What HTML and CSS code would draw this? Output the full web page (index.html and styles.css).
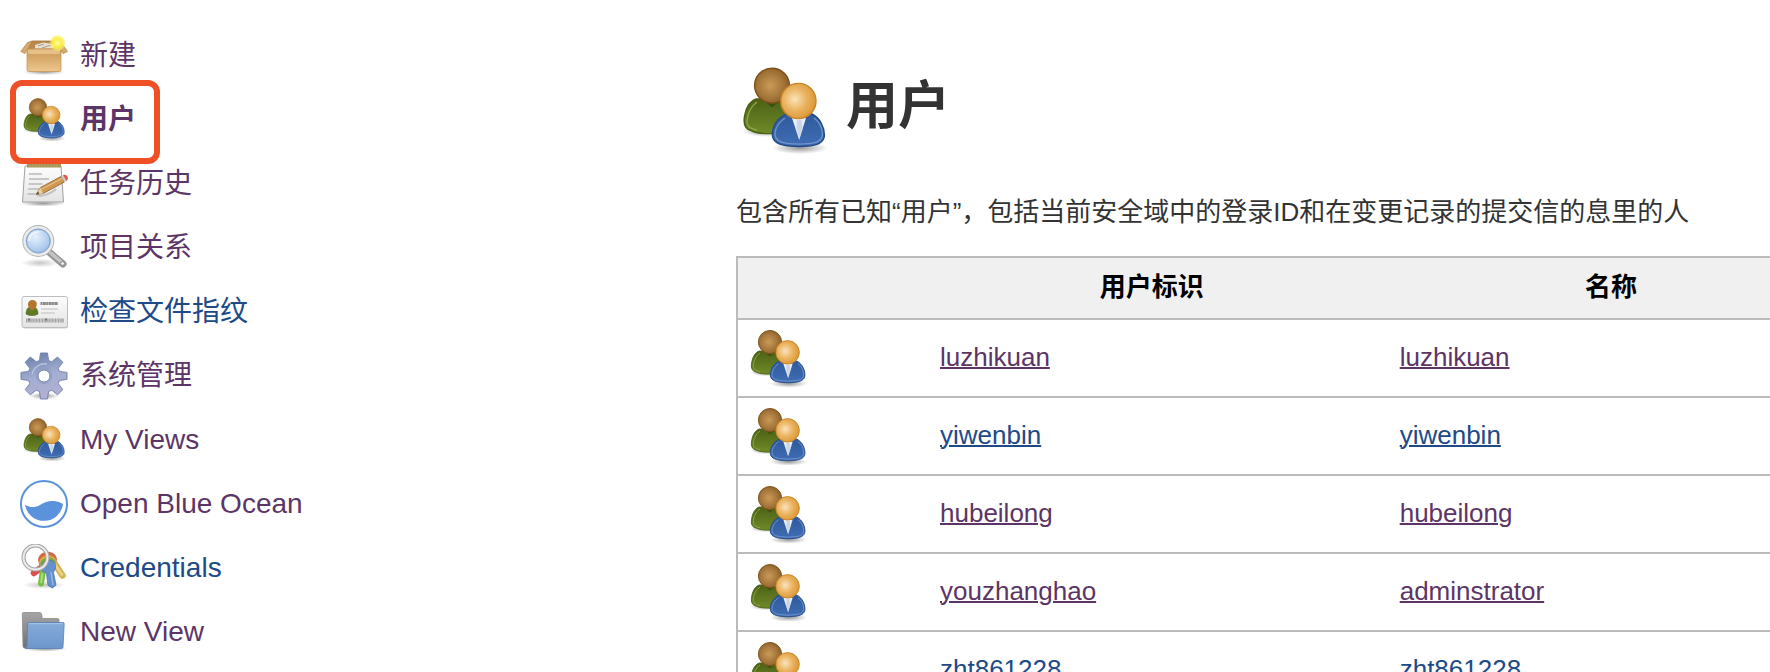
FILE: index.html
```
<!DOCTYPE html>
<html lang="zh-CN">
<head>
<meta charset="utf-8">
<title>用户</title>
<link rel="stylesheet" href="styles.css">
</head>
<body>
<svg class="sprite" aria-hidden="true">
  <defs>
    <radialGradient id="brown" cx=".45" cy=".5" r=".6"><stop offset="0" stop-color="#cb9a58"/><stop offset=".6" stop-color="#a4763a"/><stop offset="1" stop-color="#865a22"/></radialGradient>
    <radialGradient id="orange" cx=".4" cy=".45" r=".65"><stop offset="0" stop-color="#fbe3bb"/><stop offset=".5" stop-color="#eab360"/><stop offset="1" stop-color="#d8932f"/></radialGradient>
    <linearGradient id="green" x2="0" y2="1"><stop offset="0" stop-color="#4c6116"/><stop offset="1" stop-color="#6f8a28"/></linearGradient>
    <linearGradient id="blue" x2="0" y2="1"><stop offset="0" stop-color="#2f5a9c"/><stop offset="1" stop-color="#3f6db4"/></linearGradient>
    <radialGradient id="shade"><stop offset="0" stop-color="#000" stop-opacity=".4"/><stop offset="1" stop-color="#000" stop-opacity="0"/></radialGradient>
    <linearGradient id="carton" x2="0" y2="1"><stop offset="0" stop-color="#c99553"/><stop offset="1" stop-color="#edc78d"/></linearGradient>
    <radialGradient id="sun"><stop offset="0" stop-color="#fffbb0"/><stop offset=".45" stop-color="#fbf04a"/><stop offset=".75" stop-color="#fbee55" stop-opacity=".8"/><stop offset="1" stop-color="#fbf080" stop-opacity="0"/></radialGradient>
    <linearGradient id="paper" x2="0" y2="1"><stop offset="0" stop-color="#fdfdfd"/><stop offset="1" stop-color="#e3e3e3"/></linearGradient>
    <radialGradient id="lens" cx=".4" cy=".35" r=".7"><stop offset="0" stop-color="#e6f1fc"/><stop offset="1" stop-color="#94b8e6"/></radialGradient>
    <linearGradient id="gear" x1=".3" x2=".6" y2="1"><stop offset="0" stop-color="#6a7fae"/><stop offset=".5" stop-color="#a3aed0"/><stop offset="1" stop-color="#b4b0d4"/></linearGradient>
    <linearGradient id="folder" x2="0" y2="1"><stop offset="0" stop-color="#85aad8"/><stop offset="1" stop-color="#6c97cd"/></linearGradient>
    <linearGradient id="folder-back" x2="0" y2="1"><stop offset="0" stop-color="#a5a5a5"/><stop offset="1" stop-color="#707070"/></linearGradient>
  </defs>

  <symbol id="i-users" viewBox="0 0 48 48">
    <ellipse cx="15" cy="34" rx="12" ry="3" fill="url(#shade)"/>
    <ellipse cx="32" cy="42.500" rx="14" ry="3" fill="url(#shade)"/>
    <path d="M10 18h14l4 16c-5 1.500-16 2-20 0-4-1-4.500-4-3.600-8 .8-4 2.600-7 5.600-8z" fill="url(#green)" stroke="#4b6212" stroke-width=".7"/>
    <path d="M10.500 19.500c-3 2-5 6-5 10 0 2.500 2 3.500 5 4" fill="none" stroke="#8fa648" stroke-width=".7"/>
    <path d="M15 19l3 2.500 3-2.500" fill="none" stroke="#3c4f0e"/>
    <circle cx="18" cy="11.300" r="8.700" fill="url(#brown)" stroke="#7c5119" stroke-width=".7"/>
    <path d="M25 25.500h13c4 2 6.200 6.500 6.200 10.500 0 4-4 5-6.700 5.400-4 .5-8 .5-12 0-4-.5-7.300-1.900-7.300-5.500 0-5 3-8.400 6.800-10.400z" fill="url(#blue)" stroke="#264b86" stroke-width=".7"/>
    <path d="M24.500 27.500c-3 2-5 5-5 8.300 0 3 3 4 6 4.400 4 .5 8 .5 12 0 3.500-.4 5.700-1.500 5.700-4.600 0-3.300-1.700-6.200-4.200-8.100" fill="none" stroke="#6f94cd" stroke-width=".7"/>
    <path d="M28 27.500h7l-3.400 11z" fill="#e9eef7"/>
    <path d="M30.500 28.500h2.200l.6 4-1.600 5-1.500-5z" fill="#cdd6e6"/>
    <circle cx="31.200" cy="19" r="8.800" fill="url(#orange)" stroke="#c88528" stroke-width=".7"/>
  </symbol>

  <symbol id="i-new" viewBox="0 0 48 48">
    <ellipse cx="24" cy="40" rx="21" ry="3" fill="url(#shade)"/>
    <path d="M12 9h26l3.500 10.500H7z" fill="#b98a4c" stroke="#a87431" stroke-width=".8"/>
    <path d="M15 13l8-2.500 13 2-2 4H15z" fill="#e7dfd0"/>
    <path d="M18 14l6-2m-2 4l9-3" stroke="#a49c8f" fill="none"/>
    <path d="M7 17h34v20.500a2 2 0 0 1-2 2H9a2 2 0 0 1-2-2z" fill="url(#carton)" stroke="#c8965a" stroke-width=".8"/>
    <path d="M7 17.500L12 9 7.500 10.500.8 19.500 5 21.500zM41 17.500L37.500 9.500l4 1.500 6 8.500-4.500 2z" fill="#d6ab6d" stroke="#b98a4c" stroke-width=".8"/>
    <path d="M7.500 17.500h33l-1 4.500h-31z" fill="#e6c087"/>
    <circle cx="37.500" cy="11" r="8.500" fill="url(#sun)"/>
  </symbol>

  <symbol id="i-history" viewBox="0 0 48 48">
    <ellipse cx="23" cy="43.500" rx="23" ry="3" fill="url(#shade)"/>
    <path d="M5 6h36l2.500 36h-41z" fill="url(#paper)" stroke="#a2a2a2"/>
    <path d="M7 2.500h34V7.500H7z" fill="#a59455"/>
    <path d="M10 3v4m3-4v4m3-4v4m3-4v4m3-4v4m3-4v4m3-4v4m3-4v4m3-4v4m3-4v4" stroke="#b9a966" fill="none"/>
    <path d="M9 14h13m-13 5h20m-20.500 5h14m-14.500 5h12m-12.500 5h8" stroke="#b9b9b9" fill="none" stroke-width="1.300"/>
    <path d="M17 35c5 2 14-1 19-6" stroke="#999" opacity=".5" fill="none" stroke-width="2"/>
    <path d="M16 34.500l4.500-7L41 16.500l3.500 5.500L23 33.500z" fill="#cf9853" stroke="#8f6024" stroke-width=".8"/>
    <path d="M22 29l20-10.500" stroke="#f0c98b"/>
    <path d="M16 34.500l4.500-7L23 33.500z" fill="#e8cfa5"/>
    <path d="M16 34.500l2-3 1.200 2.300z" fill="#444"/>
    <path d="M41 16.500l2-1.200 3.500 5.700-2 1z" fill="#c9c9c9"/>
    <path d="M43 15.300c3-2 7 2.500 3.500 5.700z" fill="#dd5750"/>
  </symbol>

  <symbol id="i-search" viewBox="0 0 48 48">
    <ellipse cx="20" cy="39" rx="19" ry="4.500" fill="url(#shade)" opacity=".55"/>
    <path d="M29 28l14 12" stroke="#979797" stroke-width="7" stroke-linecap="round"/>
    <path d="M29 27.500l14 12" stroke="#c4c4c4" stroke-width="3.500" stroke-linecap="round"/>
    <circle cx="42.500" cy="39.500" r="2" fill="#eee" stroke="#888"/>
    <circle cx="18.300" cy="17" r="14" fill="url(#lens)" stroke="#b2b2b2" stroke-width="4"/>
    <circle cx="18.300" cy="17" r="13.800" fill="none" stroke="#e9ecec" stroke-width="2.500"/>
    <circle cx="18.300" cy="17" r="11.800" fill="none" stroke="#7fa4d8" stroke-width="1"/>
    <path d="M9 17c0-6 5-9.500 10-9" fill="none" stroke="#fff" stroke-width="2" opacity=".6"/>
  </symbol>

  <symbol id="i-card" viewBox="0 0 48 48">
    <rect x="2" y="10" width="46" height="30.500" rx="2.500" fill="#999" opacity=".45"/>
    <rect x="2" y="8.500" width="45.500" height="31" rx="2" fill="url(#paper)" stroke="#bdbdbd"/>
    <path d="M6 26c0-5 3-8 6-8s6 3 6 8c-3 2-9 2-12 0z" fill="#5d7b25" stroke="#4d661c" stroke-width=".6"/>
    <path d="M8 15.500a4.500 4.500 0 0 1 8.800 0c0 4-2 6.500-4.400 6.500S8 19.500 8 15.500z" fill="#b3762f"/>
    <path d="M20.500 15.500h17.500" stroke="#8a8a8a" stroke-width="3" stroke-dasharray="2 .4 3 .3"/>
    <path d="M21 21h17m-17 4h14" stroke="#cfcfcf" stroke-width="1.300"/>
    <path d="M6 32.500h38" stroke="#a2a2a2" stroke-width="4" stroke-dasharray="1.500 .5 .8 .4"/>
    <path d="M8 31.500h2m15 0h2" stroke="#777" stroke-width="2"/>
  </symbol>

  <symbol id="i-gear" viewBox="0 0 48 48">
    <ellipse cx="24" cy="44" rx="15" ry="3.500" fill="url(#shade)"/>
    <path fill-rule="evenodd" fill="url(#gear)" stroke="#7684ad" stroke-width="1" stroke-linejoin="round" d="M20.500 1h7l1 7.500 3.200 1.300L37.500 5l5.300 5.300-4.600 6 1.300 3.200 7.500.9v7l-7.500 1-1.300 3.200 4.600 6-5.300 5.200-5.800-4.600-3.200 1.300-1 7.500h-7l-1-7.500-3.200-1.300-6 4.600-5.100-5.200 4.600-6-1.300-3.200-7.500-1v-7l7.500-.9 1.300-3.200-4.600-6L10.300 5l6 4.800 3.200-1.300zM24 18a6 6 0 1 0 0 12 6 6 0 0 0 0-12z"/>
    <path d="M12 22c2-7 8-11 15-10" stroke="#c8d1e7" stroke-width="1.500" fill="none" opacity=".7"/>
    <path d="M24 16.500a7.500 7.500 0 1 0 .1 0" stroke="#8f9bc2" fill="none"/>
  </symbol>

  <symbol id="i-ocean" viewBox="0 0 48 48">
    <circle cx="24" cy="24" r="23" fill="#fff" stroke="#5b92dc" stroke-width="2"/>
    <path d="M5 24.800c5 3 10 3 15 .2 5-3 9-4.500 14-4 3.500.4 6.500 1.400 9 3A19.200 19.200 0 0 1 5 24.800z" fill="#5b92dc"/>
  </symbol>

  <symbol id="i-keys" viewBox="0 0 48 48">
    <ellipse cx="24" cy="41" rx="21" ry="4" fill="url(#shade)" opacity=".6"/>
    <path d="M33 17l9.500 14.500" stroke="#d3b456" stroke-width="6.500" stroke-linecap="round"/>
    <path d="M34 19l8.500 12.500" stroke="#ead48a" stroke-width="2.500"/>
    <path d="M22 23l-8 6" stroke="#d9504c" stroke-width="6.500" stroke-linecap="round"/>
    <path d="M23.500 22L21 39.500" stroke="#78c044" stroke-width="6" stroke-linecap="round"/>
    <path d="M22.500 29L21 39" stroke="#a9e07c" stroke-width="2"/>
    <path d="M18 16c1-10.500 17-11 19-1l-2 6-15 3z" fill="#d9663c"/>
    <path d="M19 18c2-8 14-9 17-2l-2 6-13 3z" fill="#d3ae4c"/>
    <path d="M20 20c2-7.500 11-8.500 15-3.500l-2 7-11 2z" fill="#76a84a"/>
    <path d="M28 16.500c5-1 8 3 7.500 7-.3 3-2 4-2 5L36 41l-3.500 3-4.500-2.500-1.500-12c-4-2-6-4-5-7 .7-3 3-5.500 6.500-6z" fill="#6491cb" stroke="#4a77b2" stroke-width=".8"/>
    <path d="M31 28l2 13" stroke="#93b6e2" stroke-width="1.500"/>
    <circle cx="15.500" cy="13.500" r="12" fill="none" stroke="#a5a5a5" stroke-width="4"/>
    <circle cx="15.500" cy="13.500" r="12" fill="none" stroke="#ececec" stroke-width="2"/>
  </symbol>

  <symbol id="i-folder" viewBox="0 0 48 48">
    <ellipse cx="25" cy="41" rx="22" ry="2.500" fill="url(#shade)"/>
    <path d="M3.500 4.500h16c1.500 0 2 .8 2.200 2l.5 4h15.300c1 0 1.500.5 1.500 1.500V40H5c-1.200 0-2-.6-2-2l-.7-32c0-1 .3-1.500 1.200-1.500z" fill="url(#folder-back)" stroke="#8a8a8a" stroke-width=".8"/>
    <path d="M8.500 14.500h34.500c.8 0 1.200.4 1.200 1.200L43 39c0 1-.6 1.500-1.500 1.500H5.500c1-.3 1.500-1.500 1.500-3l.5-22c0-.6.4-1 1-1z" fill="url(#folder)" stroke="#5580b8" stroke-width=".8"/>
    <path d="M9 15.700h34" stroke="#b3cbea" stroke-width=".8"/>
  </symbol>
</svg>

<div class="page">
  <nav class="side">
    <ul class="tasks">
      <li class="task"><svg class="icon"><use href="#i-new"/></svg><a class="task-link visited" href="#new">新建</a></li>
      <li class="task marked"><svg class="icon"><use href="#i-users"/></svg><a class="task-link visited current" href="#users">用户</a></li>
      <li class="task"><svg class="icon"><use href="#i-history"/></svg><a class="task-link visited" href="#history">任务历史</a></li>
      <li class="task"><svg class="icon"><use href="#i-search"/></svg><a class="task-link visited" href="#relation">项目关系</a></li>
      <li class="task"><svg class="icon"><use href="#i-card"/></svg><a class="task-link" href="#fingerprint">检查文件指纹</a></li>
      <li class="task"><svg class="icon"><use href="#i-gear"/></svg><a class="task-link visited" href="#manage">系统管理</a></li>
      <li class="task"><svg class="icon"><use href="#i-users"/></svg><a class="task-link visited" href="#my-views">My Views</a></li>
      <li class="task"><svg class="icon"><use href="#i-ocean"/></svg><a class="task-link visited" href="#ocean">Open Blue Ocean</a></li>
      <li class="task"><svg class="icon"><use href="#i-keys"/></svg><a class="task-link" href="#credentials">Credentials</a></li>
      <li class="task"><svg class="icon"><use href="#i-folder"/></svg><a class="task-link visited" href="#new-view">New View</a></li>
    </ul>
  </nav>

  <main class="main">
    <header class="heading">
      <svg class="icon-large"><use href="#i-users"/></svg>
      <h1 class="title">用户</h1>
    </header>
    <p class="intro">包含所有已知“用户”，包括当前安全域中的登录ID和在变更记录的提交信的息里的人</p>
    <table class="people">
      <colgroup><col class="col-icon"><col><col></colgroup>
      <thead>
        <tr><th></th><th scope="col">用户标识</th><th scope="col">名称</th></tr>
      </thead>
      <tbody>
        <tr><td class="pic"><svg class="icon-medium"><use href="#i-users"/></svg></td><td><a class="visited" href="#luzhikuan">luzhikuan</a></td><td><a class="visited" href="#luzhikuan">luzhikuan</a></td></tr>
        <tr><td class="pic"><svg class="icon-medium"><use href="#i-users"/></svg></td><td><a href="#yiwenbin">yiwenbin</a></td><td><a href="#yiwenbin">yiwenbin</a></td></tr>
        <tr><td class="pic"><svg class="icon-medium"><use href="#i-users"/></svg></td><td><a class="visited" href="#hubeilong">hubeilong</a></td><td><a class="visited" href="#hubeilong">hubeilong</a></td></tr>
        <tr><td class="pic"><svg class="icon-medium"><use href="#i-users"/></svg></td><td><a class="visited" href="#youzhanghao">youzhanghao</a></td><td><a class="visited" href="#youzhanghao">adminstrator</a></td></tr>
        <tr><td class="pic"><svg class="icon-medium"><use href="#i-users"/></svg></td><td><a href="#zht861228">zht861228</a></td><td><a href="#zht861228">zht861228</a></td></tr>
      </tbody>
    </table>
  </main>
</div>
</body>
</html>
```
FILE: styles.css
```
*,
*::after {
  box-sizing: border-box;
}

body {
  margin: 0;
  background: #fff;
  color: #333;
  font: 26px/36px "Liberation Sans", "Noto Sans CJK SC", sans-serif;
}

a {
  color: #204a87;
}

a.visited {
  color: #5c3566;
}

.sprite {
  position: absolute;
  width: 0;
  height: 0;
}

.page {
  display: flex;
  height: 100vh;
  overflow: hidden;
}

.side {
  flex: 0 0 736px;
  padding: 24px 20px 0;
}

.tasks {
  margin: 0;
  padding: 0;
  list-style: none;
}

.task {
  position: relative;
  display: flex;
  align-items: center;
  gap: 12px;
  height: 64px;
}

.task-link {
  font-size: 28px;
  text-decoration: none;
}

.current {
  font-weight: bold;
}

.icon {
  flex: none;
  width: 48px;
  height: 48px;
}

/* red frame around the highlighted entry */
.marked::after {
  content: "";
  position: absolute;
  z-index: 1;
  top: -8px;
  bottom: -12px;
  left: -10px;
  width: 150px;
  border: 6px solid #f05025;
  border-radius: 12px;
}

.main {
  flex: 1;
  min-width: 0;
  padding-top: 63px;
}

.heading {
  display: flex;
  gap: 14px;
}

.icon-large {
  width: 96px;
  height: 96px;
}

.title {
  margin: 0;
  font-size: 52px;
  line-height: 86px;
}

.intro {
  margin: 35px 0 26px;
  white-space: nowrap;
}

.people {
  width: 107%;
  border: 2px solid #bbb;
  border-collapse: collapse;
  table-layout: fixed;
}

.col-icon {
  width: 185px;
}

.people th,
.people td {
  border: 2px solid #bbb;
  border-width: 2px 0;
}

.people th {
  height: 62px;
  padding: 0 0 2px;
  background: #f0f0f0;
  color: #000;
}

.people td {
  height: 78px;
  padding: 0 18px 2px;
}

.people .pic {
  padding: 2px 8px 0;
}

.people a {
  text-decoration-thickness: 2px;
}

.icon-medium {
  display: block;
  width: 64px;
  height: 64px;
}
```
